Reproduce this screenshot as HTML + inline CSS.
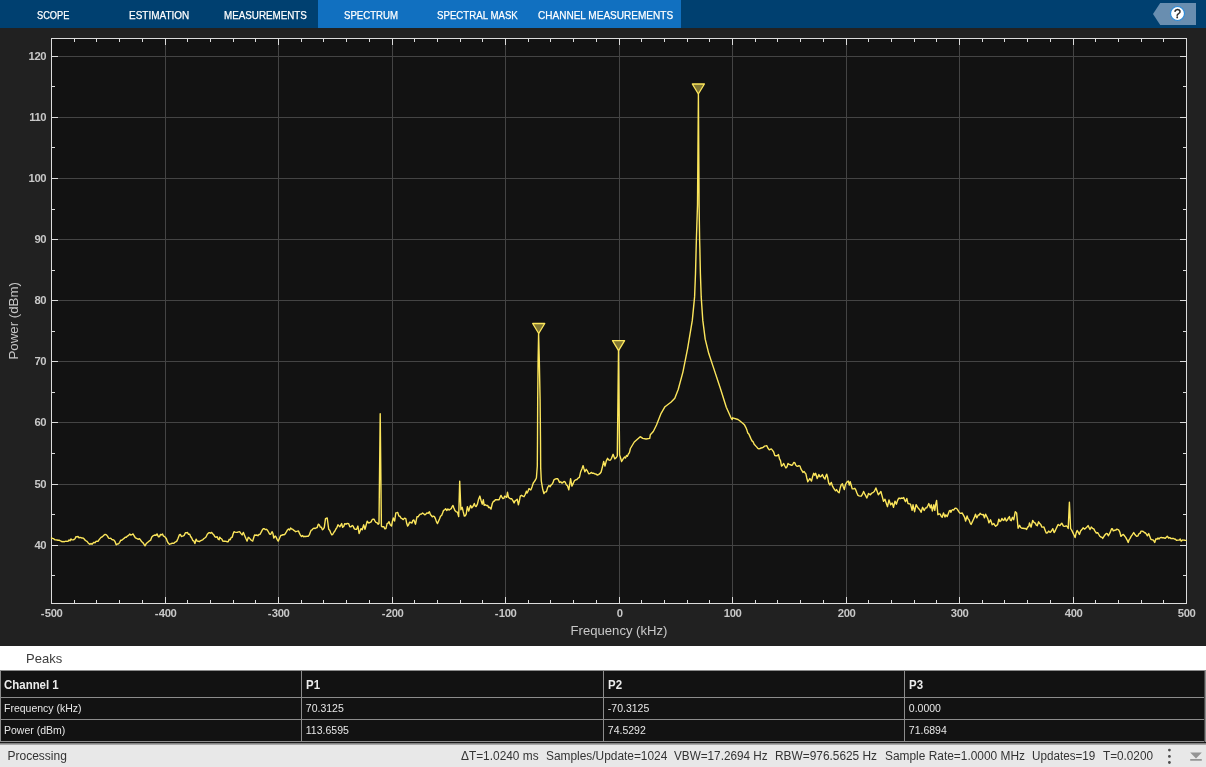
<!DOCTYPE html><html><head><meta charset="utf-8"><title>Spectrum Analyzer</title><style>
html,body{margin:0;padding:0}
body{width:1206px;height:767px;position:relative;overflow:hidden;background:#212121;font-family:"Liberation Sans", sans-serif;}
#root{position:absolute;left:0;top:0;width:1206px;height:767px;will-change:transform;}
#tb{position:absolute;left:0;top:0;width:1206px;height:28px;background:#004070;}
#tb .act{position:absolute;left:318px;top:0;width:363px;height:28px;background:#1170c0;}
#tb span{-webkit-text-stroke:0.25px #fff;position:absolute;transform-origin:0 0;top:8px;height:14px;line-height:14px;font-size:11px;color:#fff;white-space:nowrap;}
#help{position:absolute;left:1153px;top:3px}
#peaks{position:absolute;left:0;top:646px;width:1206px;height:24px;background:#fff;}
#peaks span{position:absolute;left:26px;top:5px;font-size:13px;line-height:16px;color:#3c3c3c}
#tbl{position:absolute;left:0;top:670px;width:1206px;height:72px;background:#121212;border-top:1px solid #8c8c8c;border-left:1px solid #8c8c8c;box-sizing:border-box}
#tbl .hl{position:absolute;left:0;width:1205px;height:1px;background:#8c8c8c}
#tbl .vl{position:absolute;top:0;width:1px;height:71px;background:#8c8c8c}
#tbl span{position:absolute;color:#e6e6e6;font-size:10.5px;line-height:14px;white-space:nowrap}
#tbl span.b{font-weight:bold;font-size:12.5px;color:#ececec;transform:scaleX(0.916);transform-origin:0 0;line-height:15px}
#sep{position:absolute;left:0;top:742px;width:1206px;height:3px;background:linear-gradient(#1c1c1c 0 1px,#828282 1px 2px,#a8a8a8 2px 3px)}
#st{position:absolute;left:0;top:745px;width:1206px;height:22px;background:#e8e8e8;color:#333;font-size:12px;line-height:14px}
#st span{position:absolute;top:4px;white-space:nowrap;transform-origin:0 0}
</style></head><body><div id="root"><div id="tb"><div class="act"></div><span style="left:36.7px;transform:scaleX(0.8390)">SCOPE</span><span style="left:128.6px;transform:scaleX(0.9066)">ESTIMATION</span><span style="left:223.6px;transform:scaleX(0.8924)">MEASUREMENTS</span><span style="left:344.3px;transform:scaleX(0.8736)">SPECTRUM</span><span style="left:436.6px;transform:scaleX(0.8792)">SPECTRAL MASK</span><span style="left:538.0px;transform:scaleX(0.9122)">CHANNEL MEASUREMENTS</span><svg id="help" width="44" height="23" viewBox="0 0 44 23"><path d="M7.2 0H43V22H7.2L0 11Z" fill="#698eb0"/><circle cx="24.5" cy="10.5" r="7" fill="#fff" stroke="#2b8ad8" stroke-width="1.2"/><text x="24.6" y="14.8" text-anchor="middle" font-size="12.5" stroke="#222" stroke-width="0.35" fill="#222" font-family='"Liberation Sans", sans-serif'>?</text></svg></div><svg id="plot" width="1206" height="618" viewBox="0 28 1206 618" style="position:absolute;left:0;top:28px" font-family='"Liberation Sans", sans-serif'>
<rect x="0" y="28" width="1206" height="618" fill="#212121"/>
<rect x="51" y="38" width="1136" height="566" fill="#121212"/>
<path d="M165.5 39V603M278.5 39V603M392.5 39V603M505.5 39V603M619.5 39V603M732.5 39V603M846.5 39V603M959.5 39V603M1073.5 39V603M52 56.5H1186M52 117.5H1186M52 178.5H1186M52 239.5H1186M52 300.5H1186M52 361.5H1186M52 422.5H1186M52 484.5H1186M52 545.5H1186" stroke="#444444" stroke-width="1" fill="none" shape-rendering="crispEdges"/>
<path d="M74.5 603v-3M74.5 39v3M96.5 603v-3M96.5 39v3M119.5 603v-3M119.5 39v3M142.5 603v-3M142.5 39v3M165.5 603v-6M165.5 39v6M187.5 603v-3M187.5 39v3M210.5 603v-3M210.5 39v3M233.5 603v-3M233.5 39v3M255.5 603v-3M255.5 39v3M278.5 603v-6M278.5 39v6M301.5 603v-3M301.5 39v3M323.5 603v-3M323.5 39v3M346.5 603v-3M346.5 39v3M369.5 603v-3M369.5 39v3M392.5 603v-6M392.5 39v6M414.5 603v-3M414.5 39v3M437.5 603v-3M437.5 39v3M460.5 603v-3M460.5 39v3M482.5 603v-3M482.5 39v3M505.5 603v-6M505.5 39v6M528.5 603v-3M528.5 39v3M550.5 603v-3M550.5 39v3M573.5 603v-3M573.5 39v3M596.5 603v-3M596.5 39v3M619.5 603v-6M619.5 39v6M641.5 603v-3M641.5 39v3M664.5 603v-3M664.5 39v3M687.5 603v-3M687.5 39v3M709.5 603v-3M709.5 39v3M732.5 603v-6M732.5 39v6M755.5 603v-3M755.5 39v3M777.5 603v-3M777.5 39v3M800.5 603v-3M800.5 39v3M823.5 603v-3M823.5 39v3M846.5 603v-6M846.5 39v6M868.5 603v-3M868.5 39v3M891.5 603v-3M891.5 39v3M914.5 603v-3M914.5 39v3M936.5 603v-3M936.5 39v3M959.5 603v-6M959.5 39v6M982.5 603v-3M982.5 39v3M1004.5 603v-3M1004.5 39v3M1027.5 603v-3M1027.5 39v3M1050.5 603v-3M1050.5 39v3M1073.5 603v-6M1073.5 39v6M1095.5 603v-3M1095.5 39v3M1118.5 603v-3M1118.5 39v3M1141.5 603v-3M1141.5 39v3M1163.5 603v-3M1163.5 39v3M52 56.5h6M1186 56.5h-6M52 86.5h3M1186 86.5h-3M52 117.5h6M1186 117.5h-6M52 147.5h3M1186 147.5h-3M52 178.5h6M1186 178.5h-6M52 209.5h3M1186 209.5h-3M52 239.5h6M1186 239.5h-6M52 270.5h3M1186 270.5h-3M52 300.5h6M1186 300.5h-6M52 331.5h3M1186 331.5h-3M52 361.5h6M1186 361.5h-6M52 392.5h3M1186 392.5h-3M52 422.5h6M1186 422.5h-6M52 453.5h3M1186 453.5h-3M52 484.5h6M1186 484.5h-6M52 514.5h3M1186 514.5h-3M52 545.5h6M1186 545.5h-6M52 575.5h3M1186 575.5h-3" stroke="#dcdcdc" stroke-width="1" fill="none" shape-rendering="crispEdges"/>
<rect x="51.5" y="38.5" width="1135" height="565" fill="none" stroke="#dcdcdc" stroke-width="1" shape-rendering="crispEdges"/>
<text x="51.6" y="617" text-anchor="middle" font-size="11.3" letter-spacing="-0.4" font-weight="bold" fill="#c8c8c8"><tspan letter-spacing="0.4">-</tspan>500</text>
<text x="165.6" y="617" text-anchor="middle" font-size="11.3" letter-spacing="-0.4" font-weight="bold" fill="#c8c8c8"><tspan letter-spacing="0.4">-</tspan>400</text>
<text x="278.6" y="617" text-anchor="middle" font-size="11.3" letter-spacing="-0.4" font-weight="bold" fill="#c8c8c8"><tspan letter-spacing="0.4">-</tspan>300</text>
<text x="392.6" y="617" text-anchor="middle" font-size="11.3" letter-spacing="-0.4" font-weight="bold" fill="#c8c8c8"><tspan letter-spacing="0.4">-</tspan>200</text>
<text x="505.6" y="617" text-anchor="middle" font-size="11.3" letter-spacing="-0.4" font-weight="bold" fill="#c8c8c8"><tspan letter-spacing="0.4">-</tspan>100</text>
<text x="619.6" y="617" text-anchor="middle" font-size="11.3" letter-spacing="-0.4" font-weight="bold" fill="#c8c8c8">0</text>
<text x="732.6" y="617" text-anchor="middle" font-size="11.3" letter-spacing="-0.4" font-weight="bold" fill="#c8c8c8">100</text>
<text x="846.6" y="617" text-anchor="middle" font-size="11.3" letter-spacing="-0.4" font-weight="bold" fill="#c8c8c8">200</text>
<text x="959.6" y="617" text-anchor="middle" font-size="11.3" letter-spacing="-0.4" font-weight="bold" fill="#c8c8c8">300</text>
<text x="1073.6" y="617" text-anchor="middle" font-size="11.3" letter-spacing="-0.4" font-weight="bold" fill="#c8c8c8">400</text>
<text x="1186.6" y="617" text-anchor="middle" font-size="11.3" letter-spacing="-0.4" font-weight="bold" fill="#c8c8c8">500</text>
<text x="46.2" y="60" text-anchor="end" font-size="11.3" letter-spacing="-0.4" font-weight="bold" fill="#c8c8c8">120</text>
<text x="46.2" y="121" text-anchor="end" font-size="11.3" letter-spacing="-0.4" font-weight="bold" fill="#c8c8c8">110</text>
<text x="46.2" y="182" text-anchor="end" font-size="11.3" letter-spacing="-0.4" font-weight="bold" fill="#c8c8c8">100</text>
<text x="46.2" y="243" text-anchor="end" font-size="11.3" letter-spacing="-0.4" font-weight="bold" fill="#c8c8c8">90</text>
<text x="46.2" y="304" text-anchor="end" font-size="11.3" letter-spacing="-0.4" font-weight="bold" fill="#c8c8c8">80</text>
<text x="46.2" y="365" text-anchor="end" font-size="11.3" letter-spacing="-0.4" font-weight="bold" fill="#c8c8c8">70</text>
<text x="46.2" y="426" text-anchor="end" font-size="11.3" letter-spacing="-0.4" font-weight="bold" fill="#c8c8c8">60</text>
<text x="46.2" y="488" text-anchor="end" font-size="11.3" letter-spacing="-0.4" font-weight="bold" fill="#c8c8c8">50</text>
<text x="46.2" y="549" text-anchor="end" font-size="11.3" letter-spacing="-0.4" font-weight="bold" fill="#c8c8c8">40</text>
<text x="619" y="634.5" text-anchor="middle" font-size="13.1" fill="#c8c8c8">Frequency (kHz)</text>
<text transform="translate(18,320.8) rotate(-90)" text-anchor="middle" font-size="13.3" fill="#c8c8c8">Power (dBm)</text>
<path d="M51.5 538.0 L52.5 538.4 L53.7 538.7 L54.8 539.7 L56.0 539.9 L57.0 540.0 L58.0 540.2 L59.0 540.1 L60.0 540.7 L61.0 541.1 L62.0 541.8 L63.0 541.4 L64.0 541.8 L65.0 541.4 L66.0 541.3 L67.0 541.4 L68.0 541.2 L69.0 539.9 L70.0 540.8 L71.0 538.9 L72.0 539.9 L73.0 539.9 L74.0 539.5 L75.0 538.7 L76.0 536.6 L77.0 536.9 L78.0 536.4 L79.0 537.9 L80.0 537.4 L81.0 537.6 L82.0 538.1 L83.0 537.9 L84.0 538.8 L85.0 540.1 L86.0 540.8 L87.0 541.3 L88.0 542.7 L89.0 543.7 L90.0 544.3 L91.0 543.4 L92.0 544.3 L93.0 543.1 L94.0 542.3 L95.0 542.8 L96.0 541.4 L97.0 541.1 L98.0 541.3 L99.0 539.8 L100.0 538.6 L101.0 537.4 L102.0 537.0 L103.1 536.0 L104.2 534.9 L105.2 534.4 L106.3 534.8 L107.5 536.1 L108.6 538.1 L109.7 538.4 L110.7 538.3 L111.7 539.3 L112.7 539.8 L113.7 539.9 L115.0 541.5 L116.2 544.8 L117.4 544.0 L118.5 543.9 L119.7 542.3 L120.8 540.1 L121.8 540.2 L122.9 539.3 L124.0 538.4 L125.2 537.2 L126.3 537.2 L127.4 536.1 L128.6 535.4 L129.7 534.1 L130.8 535.1 L131.9 534.7 L133.0 533.9 L134.2 536.0 L135.4 537.8 L136.6 538.4 L137.6 539.0 L138.6 539.2 L139.5 538.7 L140.5 539.9 L141.6 541.7 L142.8 542.5 L143.9 544.1 L145.0 545.8 L146.1 543.8 L147.2 542.7 L148.4 541.7 L149.5 540.8 L150.6 540.2 L151.8 536.9 L152.9 535.9 L154.0 535.4 L155.0 535.0 L156.0 535.3 L157.0 533.9 L158.5 536.9 L159.5 536.6 L160.5 534.4 L161.5 534.9 L162.5 533.9 L163.4 536.1 L164.4 536.4 L165.4 537.5 L166.4 538.8 L167.4 541.7 L168.4 543.3 L169.4 544.2 L170.5 543.9 L171.5 543.5 L172.6 543.1 L173.6 543.4 L174.7 542.4 L175.7 541.9 L176.8 541.1 L178.1 538.3 L179.3 534.9 L180.3 534.4 L181.4 536.5 L182.4 536.1 L183.4 535.9 L184.4 534.9 L185.4 532.7 L186.4 532.8 L187.4 532.4 L188.5 534.3 L189.6 534.1 L190.6 536.5 L191.7 538.0 L192.8 540.5 L193.8 540.9 L194.9 543.6 L196.1 539.2 L197.1 541.0 L198.2 541.2 L199.2 541.7 L200.3 540.9 L201.4 540.4 L202.6 539.9 L203.7 538.8 L204.8 538.0 L206.0 537.0 L207.3 534.3 L208.5 533.0 L209.5 532.6 L210.6 533.2 L211.6 532.4 L212.7 533.8 L213.7 534.7 L214.8 536.7 L216.0 537.3 L217.2 536.7 L218.1 539.1 L219.1 539.8 L219.7 537.3 L220.7 538.3 L221.8 539.0 L222.8 541.1 L223.9 541.2 L225.0 541.3 L226.1 541.4 L227.2 541.7 L228.2 541.7 L229.2 539.3 L230.2 539.8 L231.2 537.4 L232.2 537.3 L233.1 534.0 L234.0 531.7 L235.1 532.1 L236.2 532.4 L237.4 532.2 L238.5 531.9 L239.6 531.7 L240.8 533.4 L242.1 534.9 L243.4 532.4 L244.6 535.4 L245.9 538.5 L247.1 541.1 L248.3 537.3 L249.4 538.1 L250.5 539.4 L251.6 540.5 L252.7 541.1 L253.6 538.0 L254.6 534.9 L255.7 535.2 L256.8 535.0 L257.9 535.7 L259.0 534.5 L260.1 534.2 L261.2 532.1 L262.2 530.2 L263.3 528.6 L264.3 528.8 L265.4 529.6 L266.4 529.3 L267.5 530.3 L268.5 532.0 L269.6 534.1 L270.7 534.2 L272.0 531.7 L272.9 533.3 L273.8 538.0 L275.1 536.1 L276.1 537.1 L277.2 539.6 L278.2 541.1 L279.4 538.5 L280.7 535.5 L281.8 535.3 L282.9 534.6 L283.9 534.9 L285.0 534.2 L286.2 532.2 L287.5 529.9 L288.5 529.0 L289.6 530.1 L290.6 528.0 L291.6 529.0 L292.6 529.1 L293.6 530.2 L294.6 530.8 L295.6 531.7 L296.6 531.4 L297.5 531.1 L298.5 530.9 L299.6 533.7 L300.6 535.5 L301.6 536.5 L302.7 535.6 L303.7 536.7 L304.8 536.3 L305.9 536.6 L307.1 536.1 L308.2 536.2 L309.3 534.9 L310.0 532.9 L311.0 530.4 L312.1 529.8 L313.1 528.6 L314.1 528.2 L315.2 528.5 L316.2 527.9 L317.2 527.5 L318.3 524.2 L319.3 524.8 L320.3 527.1 L321.4 527.3 L322.4 529.8 L323.4 529.0 L324.3 527.3 L325.5 518.6 L327.2 518.0 L328.7 529.2 L329.7 530.2 L330.8 533.0 L331.8 534.8 L332.8 534.3 L333.9 532.2 L334.9 531.0 L335.9 529.0 L337.0 527.3 L338.0 524.8 L338.9 525.8 L339.9 526.7 L340.8 525.1 L341.7 523.6 L342.6 527.3 L343.7 526.4 L344.8 523.6 L346.1 524.2 L347.3 523.4 L348.6 523.6 L349.8 526.8 L351.0 526.7 L352.3 525.4 L353.2 526.3 L354.2 528.6 L355.4 529.4 L356.6 529.2 L357.9 526.1 L359.1 533.5 L360.1 530.9 L361.0 528.6 L362.2 529.8 L363.7 524.8 L365.0 529.2 L366.1 525.2 L367.2 521.1 L368.1 522.5 L369.1 523.0 L370.1 522.4 L371.1 521.9 L372.1 519.8 L373.1 519.1 L374.1 519.2 L375.0 521.1 L375.9 522.3 L377.0 522.7 L378.2 524.2 L379.0 523.5 L380.2 413.7 L381.4 526.0 L381.9 526.7 L382.9 526.6 L383.9 526.8 L384.9 528.9 L385.9 528.6 L387.1 523.6 L388.1 523.1 L389.0 521.7 L390.2 524.8 L391.5 526.1 L392.4 521.5 L393.3 518.0 L394.6 521.1 L395.8 513.0 L396.8 512.7 L397.7 512.4 L398.9 516.1 L399.9 516.2 L401.0 518.2 L402.0 518.6 L403.3 519.6 L404.5 518.1 L405.8 518.6 L406.7 523.3 L407.6 526.1 L408.6 524.8 L409.5 522.3 L410.8 522.5 L412.0 523.0 L412.9 520.3 L413.9 519.9 L415.5 524.2 L417.0 516.7 L418.1 516.8 L419.2 515.2 L420.4 514.1 L421.5 514.0 L422.6 513.0 L423.6 513.7 L424.7 514.8 L425.7 514.3 L426.9 512.9 L428.2 513.3 L429.4 511.8 L430.4 514.5 L431.3 515.5 L432.3 516.8 L433.4 516.2 L434.4 516.7 L435.4 518.6 L436.5 521.9 L437.5 523.6 L438.5 521.2 L439.6 518.7 L440.6 516.1 L441.6 515.5 L442.6 513.0 L443.6 510.3 L444.6 509.9 L445.6 508.7 L446.8 510.5 L447.9 508.9 L449.0 510.1 L450.1 509.3 L451.2 508.7 L452.1 506.7 L453.0 505.5 L453.9 508.0 L454.9 510.5 L456.2 511.8 L457.5 512.2 L458.7 516.6 L459.7 481.1 L460.9 509.8 L462.2 507.3 L463.2 511.7 L464.3 516.0 L465.2 515.8 L466.2 514.1 L467.4 506.6 L468.7 511.0 L469.6 508.2 L470.5 505.4 L471.8 507.9 L473.1 506.3 L474.3 503.5 L475.2 505.9 L476.1 506.6 L477.4 504.1 L478.6 499.2 L479.9 496.1 L481.1 500.7 L482.3 504.2 L483.3 499.8 L484.2 505.4 L485.3 504.7 L486.4 505.5 L487.6 505.4 L488.7 507.6 L489.8 507.3 L491.0 509.1 L492.3 503.5 L493.3 501.5 L494.4 501.0 L495.4 499.8 L496.6 499.7 L497.9 499.8 L499.1 499.8 L500.1 497.2 L501.0 495.4 L501.9 497.1 L502.9 498.6 L503.8 498.4 L504.7 496.1 L505.6 496.7 L506.6 497.3 L507.5 492.3 L508.5 497.3 L509.5 498.1 L510.6 498.8 L511.6 498.6 L512.9 500.6 L514.1 502.9 L515.1 500.9 L516.2 500.1 L517.2 499.2 L518.4 504.8 L519.3 501.1 L520.3 496.1 L521.5 495.3 L522.8 496.1 L524.0 496.7 L525.2 494.5 L526.5 491.1 L527.1 493.0 L528.0 491.3 L529.0 488.6 L529.9 489.3 L530.8 489.9 L532.0 486.9 L533.3 483.0 L534.3 481.6 L535.4 480.0 L536.4 478.0 L537.3 466.0 L537.5 440.0 L537.7 400.0 L538.1 360.0 L538.6 333.5 L539.3 360.0 L540.1 400.0 L540.5 440.0 L540.7 468.0 L541.3 481.0 L542.6 488.7 L543.9 493.6 L545.1 491.9 L546.4 491.7 L547.6 487.7 L548.9 485.5 L550.1 486.7 L551.0 485.1 L552.0 484.3 L553.0 482.7 L553.9 479.9 L555.1 479.2 L556.4 478.6 L557.6 478.7 L558.5 480.1 L559.5 482.4 L560.7 481.8 L561.9 483.0 L562.9 482.5 L564.0 481.5 L565.0 481.8 L566.3 484.7 L567.5 485.8 L568.8 489.9 L569.7 484.5 L570.6 478.7 L571.9 486.1 L573.1 483.6 L574.4 480.8 L575.6 479.9 L576.9 479.5 L578.1 478.1 L579.4 477.4 L580.6 472.1 L581.9 469.0 L583.1 465.6 L584.0 468.9 L584.9 471.8 L586.2 469.3 L587.5 471.2 L588.7 473.7 L590.0 473.5 L591.2 472.4 L592.5 473.3 L593.9 473.3 L595.0 474.0 L596.2 474.1 L597.4 475.1 L598.5 474.6 L599.8 473.7 L601.1 472.0 L602.4 467.0 L603.7 461.5 L605.0 466.1 L606.3 460.9 L607.6 458.3 L608.6 459.8 L609.6 460.2 L610.5 460.0 L611.5 458.3 L613.1 454.3 L614.8 458.9 L616.4 457.5 L617.3 456.0 L618.5 350.6 L619.6 455.0 L620.3 457.0 L621.6 461.5 L622.6 459.8 L623.6 458.2 L624.6 457.0 L625.5 457.9 L626.5 455.5 L627.4 456.3 L628.4 454.0 L629.4 452.6 L630.4 448.5 L634.3 442.0 L640.2 436.7 L642.8 438.4 L646.1 439.0 L649.7 438.4 L650.3 434.8 L653.3 431.5 L656.5 425.0 L661.1 413.3 L665.0 406.7 L670.9 402.2 L674.8 398.3 L678.2 389.5 L682.9 372.1 L687.6 348.6 L692.3 320.4 L694.6 296.9 L695.5 273.5 L695.8 262.0 L696.1 250.0 L696.4 239.0 L697.5 205.0 L698.4 94.2 L699.1 205.0 L699.6 239.0 L699.9 250.0 L700.1 260.0 L700.4 273.5 L701.2 296.9 L702.8 320.4 L705.2 339.2 L708.7 353.3 L713.4 367.4 L720.4 388.5 L726.3 407.3 L731.0 417.8 L732.2 419.5 L732.6 417.8 L738.0 419.5 L740.0 421.0 L743.3 423.7 L744.6 425.1 L745.9 427.6 L746.9 430.1 L747.8 433.0 L748.8 433.9 L749.8 436.1 L750.9 438.6 L752.0 440.9 L753.2 441.9 L754.3 444.6 L755.4 445.6 L756.6 446.9 L757.8 448.3 L758.9 448.9 L760.0 448.5 L761.1 448.0 L762.2 447.8 L763.5 447.2 L764.6 446.1 L765.6 445.9 L766.7 445.6 L768.0 448.2 L769.3 449.8 L770.3 449.4 L771.3 448.9 L772.4 450.1 L773.6 451.8 L774.8 455.6 L775.9 455.7 L777.2 455.8 L778.5 454.6 L779.5 458.8 L780.5 460.7 L781.5 466.1 L782.6 465.2 L783.7 463.5 L784.8 466.0 L785.9 468.0 L787.0 466.8 L788.0 463.5 L789.2 464.4 L790.3 464.7 L791.5 465.4 L792.6 464.8 L793.7 462.5 L794.8 462.8 L795.8 465.1 L796.7 466.1 L797.8 466.3 L798.9 465.7 L800.0 466.1 L801.0 469.1 L802.0 470.6 L803.0 472.5 L804.0 471.4 L804.9 472.7 L805.9 473.9 L806.8 478.0 L807.8 481.7 L808.8 480.2 L809.8 478.5 L810.6 479.6 L811.5 481.1 L812.6 476.6 L813.7 473.3 L814.6 475.2 L815.6 473.3 L817.2 478.5 L818.9 474.6 L819.9 476.8 L820.9 476.5 L822.4 474.6 L823.7 477.5 L825.0 479.1 L825.9 475.9 L826.7 474.2 L827.7 477.8 L828.7 483.0 L830.0 485.0 L831.3 482.4 L832.4 485.8 L833.5 487.8 L834.6 489.6 L835.5 490.7 L836.5 489.6 L837.8 491.7 L839.1 492.8 L840.1 488.4 L841.1 485.0 L842.4 483.7 L843.3 486.8 L844.3 489.6 L845.3 485.0 L846.3 483.0 L847.3 481.6 L848.3 481.1 L849.3 485.0 L850.2 481.7 L851.2 485.3 L852.2 488.9 L853.5 488.9 L854.8 488.3 L855.9 490.2 L856.9 493.0 L858.0 495.4 L859.1 495.9 L860.2 496.1 L861.3 496.1 L862.5 494.2 L863.6 491.5 L864.7 493.8 L865.7 495.6 L866.8 498.0 L867.6 496.2 L868.5 493.5 L869.5 494.2 L870.4 494.8 L871.4 493.5 L872.3 492.8 L873.3 492.3 L874.3 491.5 L875.9 488.0 L877.1 491.3 L878.3 494.8 L879.6 493.2 L880.9 491.5 L882.2 496.4 L883.5 501.3 L885.0 499.2 L886.2 503.1 L887.5 506.7 L889.0 499.9 L890.6 504.8 L892.2 503.0 L893.5 507.3 L895.0 501.1 L896.4 504.2 L897.2 501.6 L898.1 499.2 L899.1 498.0 L900.2 498.7 L901.2 498.0 L902.5 498.4 L903.7 497.6 L904.6 499.9 L905.5 501.7 L906.8 498.4 L908.0 503.6 L909.2 503.8 L910.5 504.2 L912.1 510.4 L913.0 504.8 L914.6 511.7 L916.1 504.6 L917.4 506.9 L918.6 508.6 L919.9 509.9 L921.1 512.3 L922.6 507.3 L924.2 510.4 L925.5 508.0 L926.7 507.9 L927.8 505.8 L928.8 503.6 L930.4 507.9 L931.3 504.8 L932.3 511.0 L933.8 504.8 L934.8 510.4 L935.7 504.2 L936.6 500.5 L937.9 514.8 L939.1 513.9 L940.3 514.2 L941.2 516.2 L942.2 517.3 L943.5 512.9 L945.0 517.0 L945.9 514.8 L947.2 516.6 L948.2 513.9 L949.3 510.9 L950.3 510.4 L950.9 512.3 L951.8 510.3 L952.8 509.6 L953.7 510.1 L954.7 508.5 L955.6 508.3 L956.5 508.4 L957.5 509.6 L958.4 511.0 L959.3 512.5 L960.2 513.3 L961.2 513.4 L962.1 512.9 L963.4 515.2 L964.6 517.3 L965.6 521.0 L967.1 516.0 L968.0 518.8 L969.0 519.8 L970.0 522.6 L971.1 524.5 L972.2 522.1 L973.3 519.8 L974.4 517.4 L975.5 514.2 L976.8 517.9 L978.3 515.0 L979.2 515.1 L980.1 513.3 L981.2 514.3 L982.2 514.7 L983.3 514.5 L984.5 517.9 L985.5 514.2 L987.0 517.0 L988.0 519.3 L988.9 522.9 L990.5 519.8 L991.4 522.2 L992.2 524.7 L993.8 523.5 L994.8 525.3 L995.7 526.2 L996.7 525.3 L997.6 524.7 L998.8 519.1 L1000.0 521.6 L1001.0 520.7 L1001.9 518.5 L1002.8 519.8 L1003.8 520.4 L1005.0 517.9 L1006.3 521.0 L1007.3 520.1 L1008.4 517.9 L1009.4 516.6 L1010.3 520.2 L1011.2 520.7 L1012.5 517.3 L1013.7 519.8 L1015.3 511.7 L1016.6 512.9 L1018.1 528.2 L1019.6 525.3 L1020.7 527.5 L1021.8 528.2 L1023.0 528.2 L1024.3 528.5 L1025.5 528.5 L1026.6 529.4 L1027.6 527.0 L1028.7 526.6 L1029.5 522.9 L1031.1 527.2 L1032.7 520.5 L1034.0 522.4 L1035.3 523.2 L1036.3 525.1 L1037.3 525.8 L1038.6 521.8 L1039.7 523.6 L1040.8 524.6 L1041.9 527.1 L1042.9 527.1 L1043.9 526.9 L1045.1 530.2 L1046.2 533.1 L1047.4 532.8 L1048.6 531.1 L1049.6 532.1 L1050.6 532.2 L1051.7 530.5 L1052.8 528.7 L1054.1 532.5 L1055.1 531.0 L1056.1 528.8 L1057.1 526.6 L1058.1 524.5 L1059.0 525.1 L1059.9 525.6 L1060.8 524.3 L1061.8 523.2 L1063.4 526.1 L1064.8 526.4 L1066.1 525.8 L1067.2 526.5 L1068.2 528.5 L1069.4 502.2 L1070.6 528.5 L1071.8 530.4 L1073.1 533.1 L1074.1 535.3 L1075.1 537.5 L1076.1 533.1 L1077.1 530.5 L1078.2 532.2 L1079.4 534.4 L1080.6 531.0 L1081.9 529.6 L1083.1 527.8 L1084.4 529.1 L1085.6 528.3 L1086.9 527.1 L1088.1 525.6 L1089.0 527.5 L1090.0 529.5 L1091.3 527.1 L1092.5 528.3 L1093.8 528.9 L1095.0 531.1 L1096.3 533.0 L1097.7 532.7 L1098.8 534.5 L1099.9 536.3 L1101.0 537.1 L1101.8 537.2 L1102.7 538.4 L1104.3 535.8 L1105.3 534.5 L1106.3 533.5 L1107.3 533.6 L1108.3 535.8 L1109.4 533.9 L1110.5 531.6 L1111.6 528.7 L1112.4 528.7 L1113.3 530.9 L1114.5 530.3 L1115.7 530.1 L1116.9 529.1 L1118.6 529.8 L1119.8 532.0 L1120.9 536.4 L1122.2 535.1 L1123.3 534.4 L1124.5 535.8 L1125.7 537.4 L1127.0 539.8 L1128.2 542.4 L1129.2 539.6 L1130.1 538.4 L1131.1 536.4 L1132.4 534.6 L1133.7 532.5 L1134.7 534.2 L1135.8 535.5 L1136.8 536.4 L1137.9 535.9 L1139.1 533.5 L1140.1 533.4 L1141.1 531.1 L1142.1 531.1 L1143.2 531.5 L1144.4 532.5 L1145.4 533.0 L1146.4 534.1 L1147.4 535.8 L1148.7 533.5 L1149.8 536.4 L1151.0 539.4 L1152.2 539.8 L1153.4 540.1 L1154.7 542.4 L1156.0 538.8 L1157.0 539.2 L1158.0 538.0 L1159.0 539.1 L1160.2 537.6 L1161.3 537.5 L1162.3 537.7 L1163.3 537.8 L1164.3 538.0 L1165.3 538.4 L1166.3 537.3 L1167.3 536.2 L1168.6 538.0 L1169.8 537.6 L1170.9 538.6 L1172.1 538.5 L1173.3 538.4 L1174.4 539.0 L1175.5 539.3 L1176.6 540.4 L1177.9 540.1 L1179.3 540.1 L1180.2 539.0 L1181.2 541.1 L1182.6 540.0 L1183.9 540.1 L1184.9 540.3 L1185.9 540.4" fill="none" stroke="#fce65c" stroke-width="1.4" stroke-linejoin="round" stroke-linecap="round"/>
<path d="M692.30 84.00 H704.40 L698.35 94.0 Z" fill="#807633" stroke="#fce65c" stroke-width="1.3" stroke-linejoin="round"/>
<path d="M532.65 323.50 H544.75 L538.7 333.5 Z" fill="#807633" stroke="#fce65c" stroke-width="1.3" stroke-linejoin="round"/>
<path d="M612.50 340.60 H624.60 L618.55 350.6 Z" fill="#807633" stroke="#fce65c" stroke-width="1.3" stroke-linejoin="round"/>
</svg><div id="peaks"><span>Peaks</span></div><div id="tbl"><div class="hl" style="top:26px"></div><div class="hl" style="top:48px"></div><div class="hl" style="top:70px"></div><div class="vl" style="left:300px"></div><div class="vl" style="left:602px"></div><div class="vl" style="left:903px"></div><div class="vl" style="left:1203px;width:2px;height:72px;background:linear-gradient(to right,#4a4a4a 50%,#8c8c8c 50%)"></div><span class="b" style="left:3px;top:7px">Channel 1</span><span class="b" style="left:304.8px;top:7px">P1</span><span class="b" style="left:606.8px;top:7px">P2</span><span class="b" style="left:907.8px;top:7px">P3</span><span style="left:3px;top:30px">Frequency (kHz)</span><span style="left:304.8px;top:30px">70.3125</span><span style="left:606.8px;top:30px">-70.3125</span><span style="left:907.8px;top:30px">0.0000</span><span style="left:3px;top:52px">Power (dBm)</span><span style="left:304.8px;top:52px">113.6595</span><span style="left:606.8px;top:52px">74.5292</span><span style="left:907.8px;top:52px">71.6894</span></div><div id="sep"></div><div id="st"><span style="left:7.5px">Processing</span><span class="it" style="left:461px;transform:scaleX(0.9897)">&#916;T=1.0240 ms</span><span class="it" style="left:545.5px;transform:scaleX(0.9910)">Samples/Update=1024</span><span class="it" style="left:674.3px;transform:scaleX(0.9781)">VBW=17.2694 Hz</span><span class="it" style="left:775.4px;transform:scaleX(0.9903)">RBW=976.5625 Hz</span><span class="it" style="left:885px;transform:scaleX(0.9922)">Sample Rate=1.0000 MHz</span><span class="it" style="left:1032.1px;transform:scaleX(0.9738)">Updates=19</span><span class="it" style="left:1102.6px;transform:scaleX(0.9784)">T=0.0200</span><svg style="position:absolute;left:1160px;top:-1px" width="46" height="23" viewBox="0 0 46 23"><circle cx="9.4" cy="6.1" r="1.4" fill="#4c4c4c"/><circle cx="9.4" cy="12.4" r="1.4" fill="#4c4c4c"/><circle cx="9.4" cy="18.5" r="1.4" fill="#4c4c4c"/><path d="M30.2 8.4H41.8L36 14.4Z M30.2 15H41.8V16.7H30.2Z" fill="#949494"/></svg></div></div></body></html>
